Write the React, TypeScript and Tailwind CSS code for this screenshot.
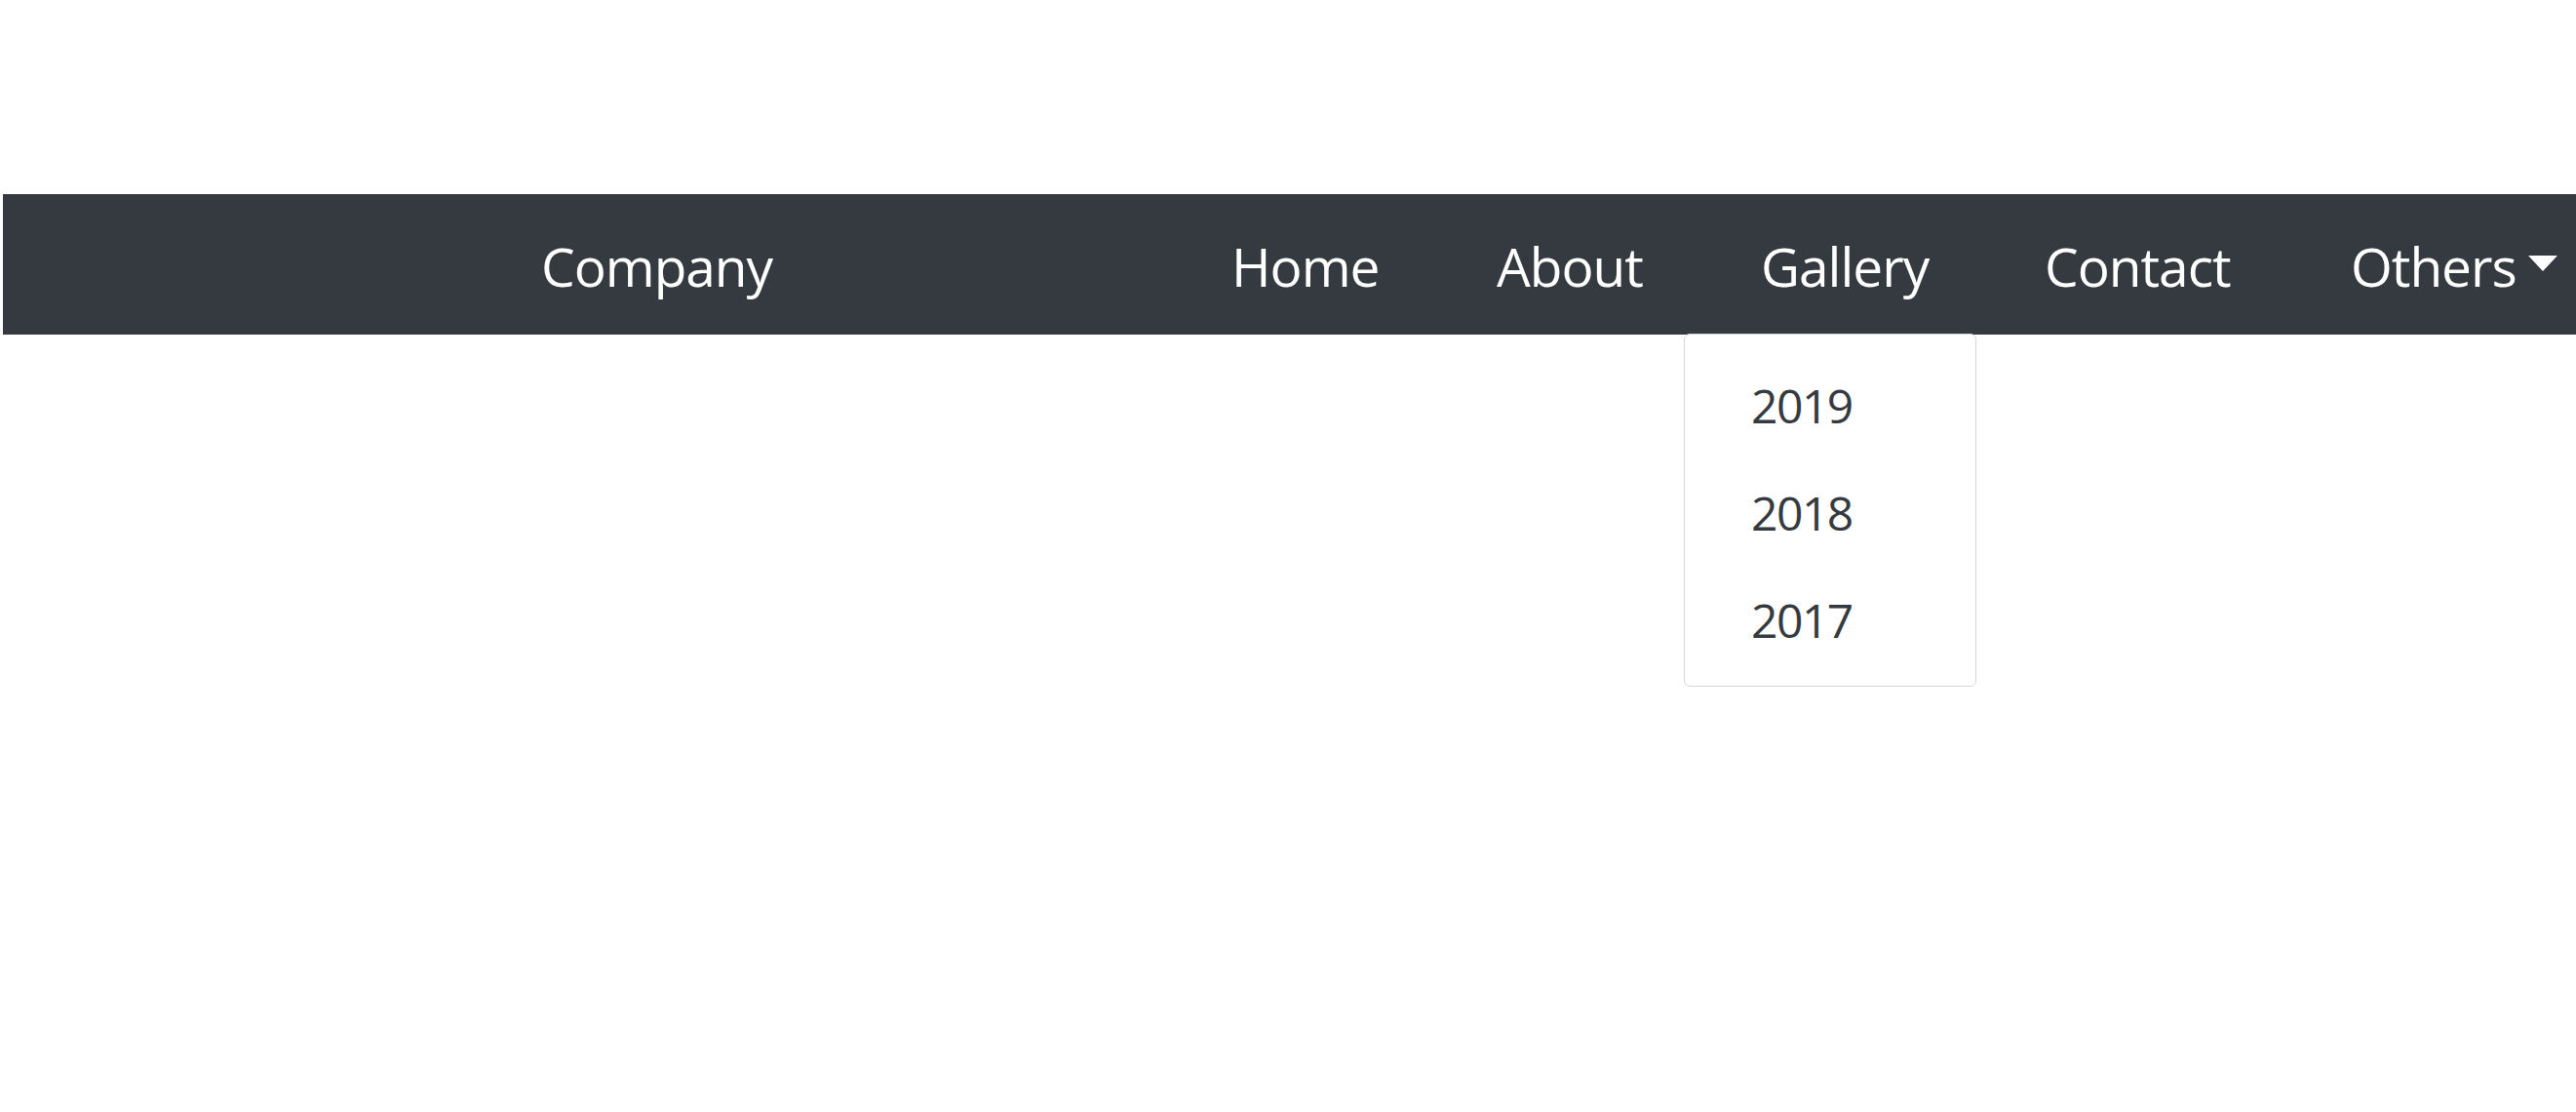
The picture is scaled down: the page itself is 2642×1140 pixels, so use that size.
import React from "react";

const font = { fontFamily: '"Open Sans", "Noto Sans", sans-serif' };

const link = "mt-[2px] text-[55px] leading-none tracking-[-1px] text-white";

export default function App() {
  return (
    <div className="min-h-screen w-full bg-white pt-[199px]" style={font}>
      <nav className="ml-[3px] flex h-[144px] items-center bg-[#343a40] text-white">
        <div className="ml-[552px] flex h-full w-[708px] items-center">
          <a className={link} href="#">
            Company
          </a>
        </div>
        <ul className="flex h-full items-center">
          <li className="flex h-full w-[272px] items-center">
            <a className={link} href="#">Home</a>
          </li>
          <li className="flex h-full w-[271px] items-center">
            <a className={link} href="#">About</a>
          </li>
          <li className="relative flex h-full w-[291px] items-center">
            <a className={link} href="#">Gallery</a>
            <div className="absolute left-[-79px] top-full -mt-[1px] w-[300px] rounded-[6px] border border-[#d6d6d6] bg-white pt-[18px] pb-[12px] text-[#343a40]">
              {["2019", "2018", "2017"].map((y) => (
                <a
                  key={y}
                  href="#"
                  className="flex h-[110px] items-center pl-[68px] text-[48px] leading-none tracking-[-1.5px] text-[#343a40]"
                >
                  {y}
                </a>
              ))}
            </div>
          </li>
          <li className="flex h-full w-[314px] items-center">
            <a className={link} href="#">Contact</a>
          </li>
          <li className="flex h-full items-center">
            <a className={"flex items-center " + link} href="#">
              <span>Others</span>
              <span className="ml-[12px] -mt-[4px] h-0 w-0 border-x-[15px] border-t-[16px] border-x-transparent border-t-white" />
            </a>
          </li>
        </ul>
      </nav>
    </div>
  );
}
